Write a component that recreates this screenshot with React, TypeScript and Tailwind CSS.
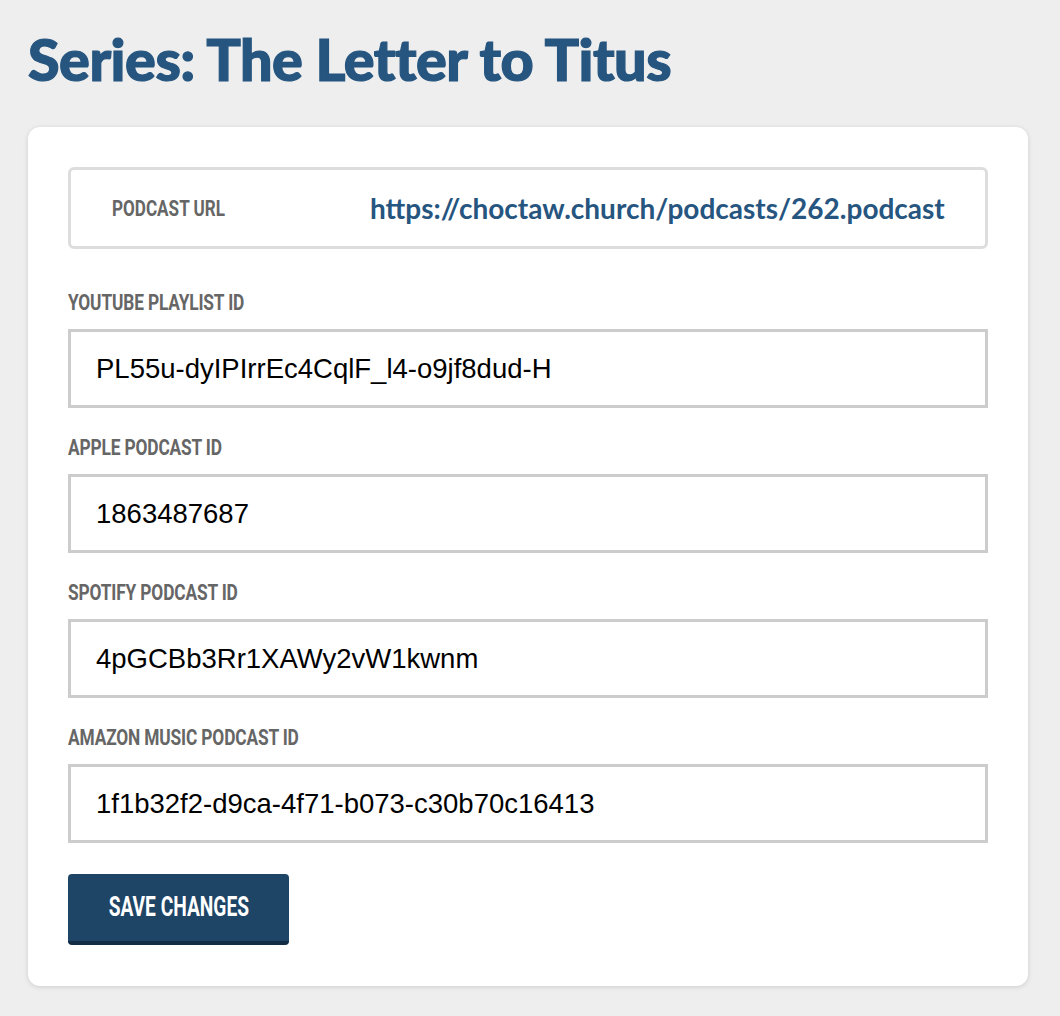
import React, { useState } from "react";

type Field = {
  key: string;
  label: string;
  value: string;
};

const initialFields: Field[] = [
  { key: "youtube", label: "YOUTUBE PLAYLIST ID", value: "PL55u-dyIPIrrEc4CqlF_l4-o9jf8dud-H" },
  { key: "apple", label: "APPLE PODCAST ID", value: "1863487687" },
  { key: "spotify", label: "SPOTIFY PODCAST ID", value: "4pGCBb3Rr1XAWy2vW1kwnm" },
  { key: "amazon", label: "AMAZON MUSIC PODCAST ID", value: "1f1b32f2-d9ca-4f71-b073-c30b70c16413" },
];

const Label: React.FC<{ children: React.ReactNode }> = ({ children }) => (
  <div className="h-[26px] overflow-visible whitespace-nowrap">
    <span className="inline-block origin-left scale-x-[0.77] font-['Roboto',sans-serif] text-[22.5px] font-bold leading-[26px] tracking-[-0.2px] text-[#666666]">
      {children}
    </span>
  </div>
);

export default function App() {
  const [fields, setFields] = useState(initialFields);

  const handleChange = (key: string, value: string) => {
    setFields(fields.map((f) => (f.key === key ? { ...f, value } : f)));
  };

  return (
    <div className="min-h-[1016px] bg-[#eeeeee] pl-[28px] pr-[32px] pt-[23px]">
      <h1 className="font-['Lato',sans-serif] text-[57.5px] font-black leading-[72px] tracking-[-0.5px] text-[#26557f] [-webkit-text-stroke:1.2px_#26557f]">
        Series: The Letter to Titus
      </h1>

      <div className="mt-[32px] rounded-[12px] bg-white px-[40px] pb-[41px] pt-[40px] shadow-[0_1px_5px_rgba(0,0,0,0.14)]">
        <div className="flex h-[82px] items-center rounded-[6px] border-[3px] border-[#dddddd] pl-[41px]">
          <div className="w-[258px]">
            <span className="inline-block origin-left scale-x-[0.76] font-['Roboto',sans-serif] text-[22.5px] font-bold leading-[26px] text-[#666666]">
              PODCAST URL
            </span>
          </div>
          <a
            href="#"
            className="font-['Lato',sans-serif] text-[28px] font-bold text-[#26557f]"
          >
            https://choctaw.church/podcasts/262.podcast
          </a>
        </div>

        {fields.map((f, i) => (
          <div key={f.key} className={i === 0 ? "mt-[40px]" : "mt-[26px]"}>
            <Label>{f.label}</Label>
            <input
              type="text"
              value={f.value}
              onChange={(e) => handleChange(f.key, e.target.value)}
              className="mt-[14px] block h-[79px] w-full border-[3px] border-[#cccccc] px-[25px] font-['Liberation_Sans',Arial,sans-serif] text-[27.5px] text-black outline-none"
            />
          </div>
        ))}

        <button className="mt-[31px] flex h-[71px] w-[221px] items-center justify-center rounded-[4px] border-b-[4px] border-[#132d45] bg-[#1e4466]">
          <span className="inline-block scale-x-[0.71] font-['Roboto',sans-serif] text-[27px] font-bold text-white">
            SAVE CHANGES
          </span>
        </button>
      </div>
    </div>
  );
}
